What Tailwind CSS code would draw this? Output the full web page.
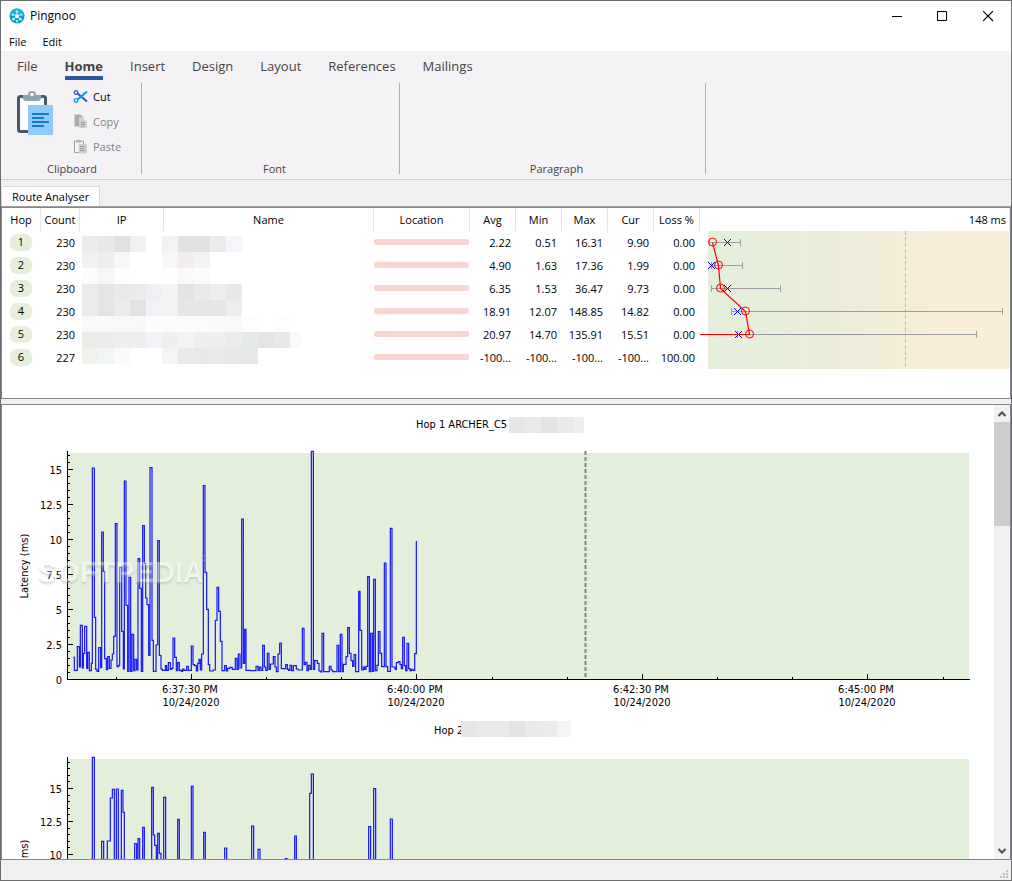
<!DOCTYPE html>
<html lang="en">
<head>
  <meta charset="UTF-8" />
  <meta name="viewport" content="width=device-width, initial-scale=1.0" />
  <title>Pingnoo</title>
  <script src="https://cdn.jsdelivr.net/npm/@tailwindcss/browser@4"></script>
</head>
<body class="bg-white text-black text-[11px] leading-4 font-['Open_Sans','Noto_Sans',sans-serif]">
<div class="h-screen flex flex-col border border-[#6d6d6f] bg-[#f0f0f0] overflow-hidden">

  <!-- title bar -->
  <header class="flex items-center h-[30px] shrink-0 bg-white pl-2">
    <svg class="w-4 h-4" viewBox="0 0 16 16">
      <circle cx="8" cy="8" r="7.500" fill="#0a9cc6" />
      <path d="M.5 8a7.500 7.500 0 0 1 15 0z" fill="#12b4e0" />
      <g fill="#bdeaf7">
        <circle cx="8" cy="3.600" r="1.300" /><circle cx="3.800" cy="6.600" r="1.200" /><circle cx="12.200" cy="6.600" r="1.200" />
        <circle cx="4.600" cy="11" r="1.500" /><circle cx="11.400" cy="11" r="1.500" /><circle cx="8" cy="13" r="1.200" />
      </g>
      <circle cx="8" cy="8.300" r="2" fill="#fff" />
      <path d="M8 8V4M8 8L4 6.500M8 8l4-1.500M8 8l-3 3M8 8l3 3" stroke="#d6f3fb" stroke-width=".7" />
    </svg>
    <h1 class="flex-1 ml-[5px] text-xs">Pingnoo</h1>
    <button class="w-[46px] h-full flex items-center justify-center" aria-label="Minimize">
      <svg class="w-[11px] h-[11px]" viewBox="0 0 11 11"><path d="M0 5.500h10" stroke="#000" /></svg>
    </button>
    <button class="w-[45px] h-full flex items-center justify-center" aria-label="Maximize">
      <svg class="w-[11px] h-[11px]" viewBox="0 0 11 11"><path d="M.5.500h9v9h-9z" fill="none" stroke="#000" /></svg>
    </button>
    <button class="w-[46px] h-full flex items-center justify-center" aria-label="Close">
      <svg class="w-[11px] h-[11px]" viewBox="0 0 11 11"><path d="M0 0l10 10M10 0L0 10" stroke="#000" stroke-width="1.100" /></svg>
    </button>
  </header>

  <nav class="flex items-center h-5 shrink-0 bg-white pl-2 pt-px gap-4">
    <button>File</button>
    <button>Edit</button>
  </nav>

  <!-- ribbon -->
  <section class="shrink-0 bg-[#f4f2f5] border-b border-[#d2d0ce] text-[#444]">
    <div class="flex items-start h-8 pt-1.5 pl-4 gap-[27px] text-[13px] leading-[19px]">
      <button>File</button>
      <button class="font-bold border-b-4 border-[#2b579a]">Home</button>
      <button>Insert</button>
      <button>Design</button>
      <button>Layout</button>
      <button>References</button>
      <button>Mailings</button>
    </div>
    <div class="flex h-[91px] mb-[5px]">
      <div class="w-[141px] flex flex-col border-r border-[#b1b0b2]">
        <div class="flex flex-1 pl-[15px]">
          <button class="self-start mt-[7px] mr-[19px]" aria-label="Paste from clipboard">
            <svg class="w-[38px] h-[48px]" viewBox="0 0 38 48">
              <rect x="2.500" y="6.500" width="27" height="35" rx="2" fill="#fff" stroke="#455a64" stroke-width="3" />
              <path d="M7 5h5a4 4 0 0 1 8 0h5v3a3 3 0 0 1-3 3H10a3 3 0 0 1-3-3z" fill="#90a4ae" />
              <circle cx="16" cy="4.500" r="1.800" fill="#fff" />
              <path d="M12 15h25v30H12z" fill="#90caf9" />
              <path d="M16 24h17M16 28h12M16 32h17M16 36h12" stroke="#1976d2" stroke-width="2" />
            </svg>
          </button>
          <div class="flex flex-col pt-px">
            <button class="flex items-center gap-1 h-[25px] text-black">
              <svg class="w-4 h-4" viewBox="0 0 16 16" fill="none">
                <path d="M4.500 4.500L14 12.500" stroke="#3f51b5" stroke-width="2" />
                <path d="M4.500 10.500L14 2.500" stroke="#039be5" stroke-width="2" />
                <circle cx="3" cy="3.500" r="1.800" stroke="#3f51b5" stroke-width="1.300" />
                <circle cx="3" cy="11.500" r="1.800" stroke="#039be5" stroke-width="1.300" />
              </svg>
              Cut
            </button>
            <button class="flex items-center gap-1 h-[25px] text-[#838383]" disabled>
              <svg class="w-4 h-4" viewBox="0 0 16 16">
                <path d="M1.500.500h6l2 2v10h-8z" fill="#ababab" />
                <path d="M6 3.500h5l3 3V14H6z" fill="#d0d0d0" />
                <path d="M11 3.500l3 3h-3z" fill="#f0f0f0" />
                <path d="M8 8.500h4M8 10.500h4M8 12.500h3" stroke="#999" />
              </svg>
              Copy
            </button>
            <button class="flex items-center gap-1 h-[25px] text-[#838383]" disabled>
              <svg class="w-4 h-4" viewBox="0 0 16 16">
                <path d="M1.500 2h9v11.500h-9z" fill="#f4f4f4" stroke="#9c9c9c" />
                <path d="M3.500 1.500h1.500a1 1 0 0 1 2 0h1.500v2h-5z" fill="#b5b5b5" />
                <path d="M5.500 5h8.500v9.500H5.500z" fill="#cfcfcf" />
                <path d="M7 7.500h5M7 9.500h4M7 11.500h5" stroke="#9a9a9a" />
              </svg>
              Paste
            </button>
          </div>
        </div>
        <p class="h-[13px] pl-0.5 text-center">Clipboard</p>
      </div>
      <div class="w-[258px] flex flex-col justify-end pl-2 border-r border-[#b1b0b2]">
        <p class="h-[13px] text-center">Font</p>
      </div>
      <div class="w-[306px] flex flex-col justify-end pl-2 border-r border-[#b1b0b2]">
        <p class="h-[13px] text-center">Paragraph</p>
      </div>
    </div>
  </section>

  <div class="flex items-end h-[27px] shrink-0 border-b border-[#a0a0a0]">
    <button class="h-5 px-[10px] bg-white border border-b-0 border-[#d9d9d9]">Route Analyser</button>
  </div>

  <!-- route table -->
  <section class="shrink-0 bg-white border border-[#828790] pb-[29px]">
    <table class="w-full table-fixed border-separate border-spacing-0">
      <colgroup>
        <col class="w-[39px]" /><col class="w-[39px]" /><col class="w-[84px]" /><col class="w-[210px]" /><col class="w-[96px]" />
        <col class="w-[46px]" /><col class="w-[46px]" /><col class="w-[46px]" /><col class="w-[46px]" /><col class="w-[46px]" />
        <col />
      </colgroup>
      <thead>
        <tr class="h-[23px] [&>th]:font-normal [&>th]:p-0 [&>th]:border-r [&>th]:border-[#e5e5e5]">
          <th>Hop</th><th>Count</th><th>IP</th><th>Name</th><th>Location</th>
          <th>Avg</th><th>Min</th><th>Max</th><th>Cur</th><th>Loss&nbsp;%</th>
          <th class="text-right"><span class="pr-[3px]">148 ms</span></th>
        </tr>
      </thead>
      <tbody id="hops"></tbody>
    </table>
  </section>

  <!-- latency plots -->
  <section class="mt-[5px] flex-1 min-h-0 flex bg-white border border-[#828790]">
    <div id="plots" class="flex-1 min-w-0 overflow-hidden font-['DejaVu_Sans_Condensed','Open_Sans',sans-serif]"></div>
    <div class="w-4 shrink-0 flex flex-col bg-[#f0f0f0]">
      <button class="h-[17px] flex items-center justify-center" aria-label="Scroll up">
        <svg class="w-2 h-2" viewBox="0 0 8 8"><path d="M.5 6L4 2.500L7.500 6" fill="none" stroke="#505050" stroke-width="2" /></svg>
      </button>
      <div class="flex-1"><div class="h-[104px] bg-[#cdcdcd]"></div></div>
      <button class="h-[17px] flex items-center justify-center" aria-label="Scroll down">
        <svg class="w-2 h-2" viewBox="0 0 8 8"><path d="M.5 2L4 5.500L7.500 2" fill="none" stroke="#505050" stroke-width="2" /></svg>
      </button>
    </div>
  </section>

  <footer class="h-5 shrink-0 flex justify-end items-end pr-[3px] pb-[2px]">
    <svg class="w-2 h-2" viewBox="0 0 8 8" fill="#bfbfbf">
      <path d="M6 0h2v2H6zM3 3h2v2H3zM6 3h2v2H6zM0 6h2v2H0zM3 6h2v2H3zM6 6h2v2H6z" />
    </svg>
  </footer>
</div>

<script>
const hops = [
  { hop: 1, count: 230, color: "#e3eedb", v: ["2.22", "0.51", "16.31", "9.90", "0.00"], avg: 12, cur: 28, bar: [9, 40] },
  { hop: 2, count: 230, color: "#e4eedb", v: ["4.90", "1.63", "17.36", "1.99", "0.00"], avg: 18, cur: 12, bar: [11, 42] },
  { hop: 3, count: 230, color: "#e4eedb", v: ["6.35", "1.53", "36.47", "9.73", "0.00"], avg: 20, cur: 28, bar: [11, 80] },
  { hop: 4, count: 230, color: "#e8eedb", v: ["18.91", "12.07", "148.85", "14.82", "0.00"], avg: 45, cur: 38, bar: [31, 302] },
  { hop: 5, count: 230, color: "#e8eedb", v: ["20.97", "14.70", "135.91", "15.51", "0.00"], avg: 49, cur: 39, bar: [37, 276] },
  { hop: 6, count: 227, color: "#e3eedb", v: ["-100...", "-100...", "-100...", "-100...", "100.00"] },
];

// redacted addresses and names, 16px blocks, "-" is an empty block
const mosaic = [
  "ececec e8e8e8 e0e0e0 f0f2f1 - f2f2f1 e1e1e2 dfe2e1 eaecea f5f6fa",
  "f1f1f0 f1eded f6f8f7 - - f7f7f6 f1eeed f2f4f3",
  "fcfcfc f5f7f6 fdfdfd - - fefefc f9f9f9 fbfbfb",
  "ebebeb e4e4e4 e9e9e8 eaecea eff0f4 f2f3f2 e4e3e2 e8eae9 eceeed e8e8ea",
  "ebebeb e4e4e4 ebebeb e3e2e0 f1f2f7 f2f2f1 e5e5e6 e5e5e6 e6e6e4 ededee",
  "f9f9f9 fafaf8 f9f9f9 f8f8f6 fcfcfc fbfbfb fbfbfb fbfbfb fafafa f9f9f7 fdfdfd - fdfdfd",
  "ebebea ececea eeeeee eeeeec f2f3f8 efefee f3f3f3 eeeeee eeeeef ebebe9 e6e9e9 e4e4e2 e7e9e8 f8f9fd",
  "f1f2ec f2f6f3 fafafa - - f3f4f3 e9ebea e8e8e8 e9e9e9 e8e8e8 e7e7e7",
];

function blocks(row, x, y, w = 999) {
  return row.split(" ").map((c, i) => c === "-" ? "" :
    `<rect x="${x + i * 16}" y="${y}" width="${Math.min(16, w - i * 16)}" height="16" fill="#${c}" />`).join("");
}

function routeGraph() {
  const seen = hops.filter(h => h.bar);
  const y = i => i * 23 + 11;
  return `
    <svg class="block h-[138px] w-full" viewBox="0 0 310 138" preserveAspectRatio="xMinYMin meet" fill="none">
      <defs>
        <linearGradient id="heat"><stop offset="0" stop-color="#e3efdb" /><stop offset=".5" stop-color="#eeedd9" /><stop offset=".78" stop-color="#f9edd9" /><stop offset="1" stop-color="#fbedda" /></linearGradient>
      </defs>
      <rect x="8" width="302" height="138" fill="url(#heat)" />
      <path d="M205.500 0V136" stroke="#bdb9b9" stroke-dasharray="4 2" />
      ${seen.map((h, i) => `<path d="M${h.bar[0]} ${y(i) + .5}H${h.bar[1]}M${h.bar[0] + .5} ${y(i) - 3}v7M${h.bar[1] + .5} ${y(i) - 3}v7" stroke="#a0a0a4" />`).join("")}
      ${seen.map((h, i) => `<path d="M${h.cur - 4} ${y(i) - 3}l7 7m0 -7l-7 7" stroke="#0000ee" />`).join("")}
      <path d="M${seen.map((h, i) => `${h.avg + .5} ${y(i) + .5}`).join("L")}H0" stroke="#f00" stroke-width="1.200" />
      ${seen.map((h, i) => `<circle cx="${h.avg + .5}" cy="${y(i)}" r="4" stroke="#f00" />`).join("")}
    </svg>`;
}

document.getElementById("hops").innerHTML = hops.map((h, i) => `
  <tr class="h-[23px]">
    <td class="p-0 pl-2"><span class="block w-[22px] h-[17px] rounded-[7px] text-center" style="background:${h.color}">${h.hop}</span></td>
    <td class="p-0 pr-[5px] text-right">${h.count}</td>
    ${i === 0 ? `<td colspan="2" rowspan="6" class="p-0 align-top"><svg class="block w-[294px] h-[138px]" shape-rendering="crispEdges">${mosaic.map((r, n) => blocks(r, 2, 5 + n * 16, 220)).join("")}</svg></td>` : ""}
    <td class="p-0 pr-px"><div class="h-1.5 mb-[2px] rounded-[2px] bg-[#f9d6d2]"></div></td>
    ${h.v.map(t => `<td class="p-0 pr-[5px] text-right">${t}</td>`).join("")}
    ${i === 0 ? `<td rowspan="6" class="p-0 align-top">${routeGraph()}</td>` : ""}
  </tr>`).join("");

// each pair is "x,y": the level holds until the next x. Three units to a pixel.
const hop1 = `220,772 223,811 232,740 238,801 241,676 247,804 250,760 254,679 260,805 263,757 268,812 274,790 277,204 283,652 287,808 291,814
  296,743 302,803 305,396 310,514 314,776 319,809 323,770 328,805 333,780 337,762 341,709 346,371 351,800 356,796 359,502 365,694 370,807
  373,243 378,616 383,814 387,532 392,814 396,703 401,812 405,778 410,810 414,476 419,565 424,814 428,377 433,490 437,594 441,614 446,766
  450,203 456,721 460,814 468,735 473,422 478,766 483,807 487,811 496,797 500,811 505,788 511,808 515,805 519,714 524,772 529,812 533,788
  538,811 544,814 548,807 552,811 560,799 565,811 574,738 579,794 584,797 589,813 593,790 597,778 601,810 605,762 610,257 615,517 620,628
  625,794 629,813 640,810 646,661 651,562 656,634 661,724 666,812 674,797 679,813 683,805 690,802 697,808 706,775 711,808 715,762 720,804
  725,357 730,790 734,688 738,811 752,812 768,799 774,811 778,801 783,811 788,736 793,801 797,811 802,760 807,808 811,792 820,770 825,801
  829,815 834,762 839,729 844,806 857,794 862,808 866,811 870,796 875,812 880,797 889,807 894,810 907,685 912,794 916,787 921,812 925,796
  930,808 934,154 940,808 944,782 952,790 957,813 962,816 966,700 971,815 988,799 993,810 998,815 1011,736 1016,815 1021,703 1026,815
  1030,793 1038,770 1043,683 1048,760 1053,782 1058,799 1062,764 1067,815 1076,574 1080,691 1085,810 1090,801 1094,808 1098,799 1103,530
  1108,815 1112,700 1117,814 1121,538 1126,812 1131,796 1135,695 1140,760 1145,800 1153,489 1158,800 1163,814 1171,385 1176,801 1185,808
  1189,788 1195,785 1200,794 1204,806 1208,712 1213,797 1217,812 1221,730 1226,806 1230,812 1234,808 1239,811 1244,761 1249,423`;

const hop2 = `220,800 277,172 283,800 305,424 311,800 322,423 331,294 337,268 343,800 349,267 355,800 364,271 369,337 373,800 404,431 410,800
  414,416 419,800 428,382 433,800 455,262 460,405 464,436 469,800 473,400 478,460 483,800 491,292 497,800 533,358 538,800 574,259 579,800
  611,397 616,800 674,444 680,800 755,378 761,800 774,448 780,800 856,476 861,800 884,408 889,800 929,280 934,222 940,800 1106,380 1112,800
  1121,266 1127,800 1171,357 1177,800 1249,800`;

const times = [["6:37:30 PM", 189], ["6:40:00 PM", 414], ["6:42:30 PM", 640], ["6:45:00 PM", 865]];

function stepPath(data) {
  return data.trim().split(/\s+/).map((p, i) => {
    const [x, y] = p.split(",");
    return i ? `H${x}V${y}` : `M${x} ${y}`;
  }).join("");
}

function plot(o) {
  let ticks = "", labels = "";
  for (let n = 1; o.zero - n * o.step * .2 > 47; n++) {
    const y = Math.round(o.zero - n * o.step * .2) + .5;
    ticks += `M66 ${y}h${n % 5 ? 2 : 5}`;
    if (n % 5 === 0) labels += `<text x="60" y="${y + 4}" text-anchor="end">${n / 2}</text>`;
  }
  [114, 264, 339, 490, 565, 715, 790, 941].forEach(x => ticks += `M${x + .5} 274v-2`);
  times.forEach(t => ticks += `M${t[1] + .5} 274v-5`);
  return `
    <svg class="block w-full" viewBox="0 0 992 306" fill="#000" font-size="11">
      <text x="${o.titleX}" y="23">${o.title}</text>
      ${blocks(o.blocks, o.blocksX, o.blocksY, o.blocksW)}
      <rect x="66" y="${o.top}" width="901" height="${274 - o.top}" fill="#e3efdb" />
      <svg x="65" y="45" width="903" height="229" viewBox="201 ${o.origin} 2709 687">
        <path d="${stepPath(o.data)}" fill="none" stroke="#1414ff" stroke-width="3.600" />
      </svg>
      ${o.marker ? `<path d="M583.500 46V274" stroke="#7d8579" stroke-width="2" stroke-dasharray="4 2" />` : ""}
      <path d="M65.500 46V274.500H968${ticks}" fill="none" stroke="#000" shape-rendering="crispEdges" />
      ${labels}
      <text x="60" y="279" text-anchor="end">0</text>
      <text transform="translate(26 161) rotate(-90)" text-anchor="middle">Latency (ms)</text>
      ${times.map(t => `<text x="${t[1] - 1}" y="288" text-anchor="middle">${t[0]}</text><text x="${t[1]}" y="301" text-anchor="middle">10/24/2020</text>`).join("")}
      ${o.mark ? `<g font-family="Liberation Sans" font-weight="bold" font-size="29" opacity=".4">
        <text x="36" y="177" fill="#fff" class="drop-shadow-[0_2px_1px_#999]">${o.mark}</text>
        <circle cx="202" cy="153" r="2.500" fill="none" stroke="#bbb" /></g>` : ""}
    </svg>`;
}

document.getElementById("plots").innerHTML =
  plot({ title: "Hop 1 ARCHER_C5", titleX: 414, blocks: "e6e6e6 eaeaea e3e3e3 eaeaea efefef", blocksX: 507, blocksY: 12, blocksW: 75, top: 48,
    zero: 274, step: 35, origin: 150, data: hop1, marker: true, mark: "SOFTPEDIA" }) +
  plot({ title: "Hop 2", titleX: 432, blocks: "e6e6e6 e9e9e9 eaeaea e3e3e3 eaeaea ebebeb f4f4f4", blocksX: 459, blocksY: 10, blocksW: 110, top: 48,
    zero: 275, step: 33, origin: 168, data: hop2 });
</script>
</body>
</html>
